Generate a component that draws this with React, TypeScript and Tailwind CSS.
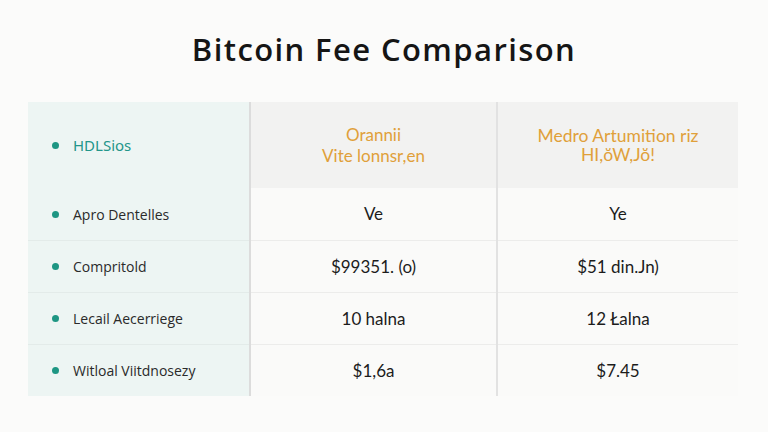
import React from 'react';

interface Row {
  label: string;
  a: string;
  b: string;
}

const rows: Row[] = [
  { label: 'Apro Dentelles', a: 'Ve', b: 'Ye' },
  { label: 'Compritold', a: '$99351. (o)', b: '$51 din.Jn)' },
  { label: 'Lecail Aecerriege', a: '10 halna', b: '12 Łalna' },
  { label: 'Witloal Viitdnosezy', a: '$1,6a', b: '$7.45' },
];

const Bullet: React.FC = () => <span className="w-[7px] h-[7px] rounded-full bg-[#1e9683] shrink-0" />;

const App: React.FC = () => {
  return (
    <div className="w-[768px] h-[432px] bg-[#fbfbfa] overflow-hidden font-['Lato',sans-serif]">
      <h1 className="pt-[26px] h-[102px] text-center text-[31px] font-semibold text-[#151515] tracking-[1.4px] font-['Open_Sans',sans-serif]">
        Bitcoin Fee Comparison
      </h1>

      <div className="ml-[28px] w-[710px] grid grid-cols-[221px_2px_245px_2px_240px]">
        {/* header */}
        <div className="h-[86px] bg-[#edf5f3] flex items-center gap-[14px] pl-[24px]">
          <Bullet />
          <span className="text-[15px] text-[#23968a] font-['Noto_Sans',sans-serif]">HDLSios</span>
        </div>
        <div className="bg-[#dcdcdc] row-span-5" />
        <div className="h-[86px] bg-[#f2f2f1] flex flex-col items-center justify-center text-[17px] leading-[21px] text-[#e0a03a]">
          <span>Orannii</span>
          <span>Vite lonnsr,en</span>
        </div>
        <div className="bg-[#e2e2e2] row-span-5" />
        <div className="h-[86px] bg-[#f2f2f1] flex flex-col items-center justify-center text-[17.5px] leading-[19px] text-[#e0a03a]">
          <span>Medro Artumition riz</span>
          <span>HI,ŏW,Jŏ!</span>
        </div>

        {rows.map((row, i) => (
          <React.Fragment key={i}>
            <div
              className={`h-[52px] bg-[#edf5f3] flex items-center gap-[14px] pl-[24px] ${
                i > 0 ? 'border-t border-[#e3ebe9]' : ''
              }`}
            >
              <Bullet />
              <span className="text-[14px] text-[#2a2a2a] font-['Open_Sans',sans-serif]">{row.label}</span>
            </div>
            <div
              className={`h-[52px] bg-[#fafaf9] flex items-center justify-center text-[17px] text-[#1c1c1c] ${
                i > 0 ? 'border-t border-[#ececeb]' : ''
              }`}
            >
              {row.a}
            </div>
            <div
              className={`h-[52px] bg-[#fafaf9] flex items-center justify-center text-[17px] text-[#1c1c1c] ${
                i > 0 ? 'border-t border-[#ececeb]' : ''
              }`}
            >
              {row.b}
            </div>
          </React.Fragment>
        ))}
      </div>
    </div>
  );
};

export default App;
